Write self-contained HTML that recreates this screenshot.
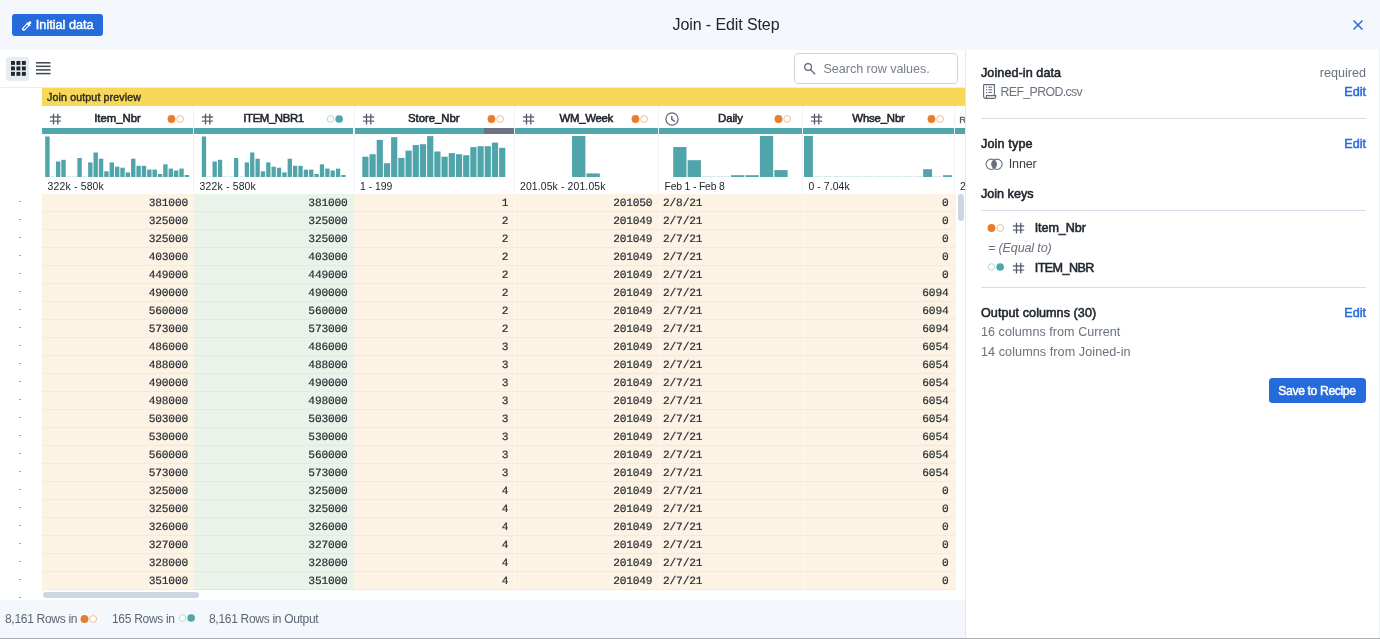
<!DOCTYPE html>
<html><head><meta charset="utf-8"><title>Join - Edit Step</title>
<style>
*{box-sizing:border-box;margin:0;padding:0}
html,body{width:1380px;height:639px;overflow:hidden;background:#fff;font-family:"Liberation Sans",sans-serif;color:#20262e}
.abs{position:absolute}
#hdr{position:absolute;left:0;top:0;width:1380px;height:50px;background:#f4f7fc}
#btn1{position:absolute;left:12px;top:14px;width:91px;height:22px;background:#266bdc;border-radius:3px;color:#fff;-webkit-text-stroke:0.45px;font-size:12.7px;line-height:22px;padding-left:23.8px;letter-spacing:0px}
#title{position:absolute;left:0;top:13px;width:1452px;text-align:center;font-size:16px;line-height:24px;color:#20262e;letter-spacing:-0.1px}
#foot{position:absolute;left:0;top:600px;width:965px;height:38px;background:#f4f7fc;font-size:12px;letter-spacing:-0.3px;color:#5c6672;line-height:38px}
#foot span{position:absolute;top:0;white-space:nowrap}
#botline{position:absolute;left:0;top:638px;width:1380px;height:1px;background:#a9adb3}
#panel{position:absolute;left:965px;top:50px;width:415px;height:588px;background:#fff;border-left:1.5px solid #e4e9f1}
#panel .b{position:absolute;-webkit-text-stroke:0.55px;font-size:12.6px;color:#20262e;white-space:nowrap;line-height:16px}
#panel .g{position:absolute;font-size:12.6px;color:#68717d;white-space:nowrap;line-height:16px}
#panel .e{position:absolute;-webkit-text-stroke:0.5px;font-size:12.6px;color:#266bdc;white-space:nowrap;line-height:16px;right:14px}
#panel .hr{position:absolute;left:15px;width:385px;height:1px;background:#d5dde8}
#save{position:absolute;left:302.5px;top:328px;width:97px;height:25px;background:#266bdc;border-radius:3.5px;letter-spacing:-0.38px;color:#fff;-webkit-text-stroke:0.45px;font-size:12.2px;line-height:26px;text-align:center}
#ybar{position:absolute;left:42px;top:88px;width:923px;height:18px;background:#f7d858;-webkit-text-stroke:0.4px;letter-spacing:0.15px;font-size:10.6px;line-height:18px;padding-left:5px;color:#2a2a22}
.ch{position:absolute;top:106px;height:22.5px;-webkit-text-stroke:0.55px;font-size:11.4px;line-height:25px;text-align:center;color:#20262e;white-space:nowrap}
.tb{position:absolute;top:128px;height:6px;background:#4fa6ab}
.rg{position:absolute;top:180px;height:13px;font-size:10.4px;line-height:13px;color:#20262e;white-space:nowrap;letter-spacing:0.2px}
.ic,.mk{position:absolute}
.col{position:absolute;top:193.5px}
.col span{display:block;transform:rotate(0.03deg)}
.col div{height:18px;border-bottom:1px solid rgba(120,100,60,0.055);font-family:"Liberation Mono",monospace;font-size:11.2px;letter-spacing:-0.17px;-webkit-text-stroke:0.2px;line-height:18.4px;color:#2b3036;white-space:pre}
.o div{background:#fcf3e4}
.g2 div{background:#eaf3ea}
.r div{text-align:right;padding-right:var(--pr)}
.l div{text-align:left;padding-left:4.4px}
.dot{position:absolute;left:19.1px;width:1.6px;height:1.6px;border-radius:1px;background:#8f96a0}
#search{position:absolute;left:794px;top:53px;width:164px;height:31px;border:1px solid #ccd3dc;border-radius:3px;background:#fff;font-size:12.6px;color:#78808b;line-height:30.5px;padding-left:28.5px;letter-spacing:-0.05px;border-radius:4px}
#root{position:absolute;left:0;top:0;width:1380px;height:639px;will-change:transform}
</style></head><body><div id="root">
<div id="hdr">
<div id="btn1">Initial data<svg style="position:absolute;left:9.5px;top:6.75px" width="10" height="10" viewBox="0 0 10 10" fill="none" stroke-linecap="round"><path d="M1.75 7.95L5.9 3.8" stroke="#fff" stroke-width="3.5"/><path d="M2.0 7.7L5.7 4.0" stroke="#266bdc" stroke-width="1.25"/><path d="M4.9 1.8L8.2 5.1" stroke="#fff" stroke-width="1.3" stroke-linecap="butt"/><path d="M6.7 3L8 1.7" stroke="#fff" stroke-width="2.6"/></svg></div>
<div id="title">Join - Edit Step</div>
<svg style="position:absolute;left:1352px;top:19px" width="12" height="12" viewBox="0 0 12 12"><path d="M1.5 1.5L10.5 10.5M10.5 1.5L1.5 10.5" stroke="#266bdc" stroke-width="1.5" fill="none"/></svg>
</div>

<div class="abs" style="left:6px;top:57px;width:23px;height:24px;background:#e7ebf2;border-radius:3px"></div>
<svg class="abs" style="left:10.8px;top:61px" width="15" height="15" viewBox="0 0 15 15" fill="#20262e"><rect x="0" y="0" width="3.9" height="3.9"/><rect x="5.45" y="0" width="3.9" height="3.9"/><rect x="10.9" y="0" width="3.9" height="3.9"/><rect x="0" y="5.45" width="3.9" height="3.9"/><rect x="5.45" y="5.45" width="3.9" height="3.9"/><rect x="10.9" y="5.45" width="3.9" height="3.9"/><rect x="0" y="10.9" width="3.9" height="3.9"/><rect x="5.45" y="10.9" width="3.9" height="3.9"/><rect x="10.9" y="10.9" width="3.9" height="3.9"/></svg>
<svg class="abs" style="left:36px;top:61px" width="15" height="15" viewBox="0 0 15 15" fill="#3d4651"><rect x="0" y="1.05" width="14.5" height="1.5"/><rect x="0" y="4.60" width="14.5" height="1.5"/><rect x="0" y="8.15" width="14.5" height="1.5"/><rect x="0" y="11.85" width="14.5" height="1.5"/></svg>
<div id="search">Search row values.<svg style="position:absolute;left:8px;top:7.5px" width="14" height="14" viewBox="0 0 14 14" fill="none" stroke="#5d6673" stroke-width="1.25"><circle cx="5.1" cy="5" r="3.4"/><path d="M7.7 7.6L12 12.2"/></svg></div>
<div class="abs" style="left:0;top:87px;width:965px;height:1px;background:#eaeef6"></div>
<div id="ybar">Join output preview</div>

<div class="ch" style="left:42px;width:151px"><span style="letter-spacing:-0.02px">Item_Nbr</span></div>
<svg class="ic" style="left:49px;top:112px" width="14" height="14" viewBox="0 0 14 14" fill="none" stroke="#5d6673"><path d="M0.9 5H12.2M0.9 9.1H12.2" stroke-width="1.35" stroke="#687180"/><path d="M4.5 1.7V12.4M8.8 1.7V12.4" stroke-width="1.3" stroke="#535b68"/></svg>
<svg class="mk " style="left:166.5px;top:113.5px" width="18" height="10" viewBox="0 0 18 10"><circle cx="4.5" cy="5" r="3.95" fill="#e67e2e"/><circle cx="13.15" cy="5" r="3.4" fill="#fff" stroke="#f2bc8d" stroke-width="1"/></svg>
<div class="tb" style="left:42px;width:151px"></div>
<div class="rg" style="left:47.5px;letter-spacing:0.2px">322k - 580k</div>
<div class="ch" style="left:194px;width:159px"><span style="letter-spacing:-0.4px">ITEM_NBR1</span></div>
<svg class="ic" style="left:201px;top:112px" width="14" height="14" viewBox="0 0 14 14" fill="none" stroke="#5d6673"><path d="M0.9 5H12.2M0.9 9.1H12.2" stroke-width="1.35" stroke="#687180"/><path d="M4.5 1.7V12.4M8.8 1.7V12.4" stroke-width="1.3" stroke="#535b68"/></svg>
<svg class="mk " style="left:326.25px;top:113.5px" width="18" height="10" viewBox="0 0 18 10"><circle cx="4.5" cy="5" r="3.3" fill="#fff" stroke="#b3d9dc" stroke-width="1"/><circle cx="13.15" cy="5" r="3.8" fill="#4fa6ab"/></svg>
<div class="tb" style="left:194px;width:159px"></div>
<div class="rg" style="left:199.5px;letter-spacing:0.2px">322k - 580k</div>
<div class="abs" style="left:193px;top:106px;width:1px;height:87px;background:#f1f2f4"></div>
<div class="ch" style="left:354.5px;width:158.5px"><span style="letter-spacing:-0.06px">Store_Nbr</span></div>
<svg class="ic" style="left:361.5px;top:112px" width="14" height="14" viewBox="0 0 14 14" fill="none" stroke="#5d6673"><path d="M0.9 5H12.2M0.9 9.1H12.2" stroke-width="1.35" stroke="#687180"/><path d="M4.5 1.7V12.4M8.8 1.7V12.4" stroke-width="1.3" stroke="#535b68"/></svg>
<svg class="mk " style="left:486.5px;top:113.5px" width="18" height="10" viewBox="0 0 18 10"><circle cx="4.5" cy="5" r="3.95" fill="#e67e2e"/><circle cx="13.15" cy="5" r="3.4" fill="#fff" stroke="#f2bc8d" stroke-width="1"/></svg>
<div class="tb" style="left:354.5px;width:158.5px"></div>
<div class="rg" style="left:360.0px;letter-spacing:0.0px">1 - 199</div>
<div class="abs" style="left:353.5px;top:106px;width:1px;height:87px;background:#f1f2f4"></div>
<div class="ch" style="left:514.5px;width:143.5px"><span style="letter-spacing:-0.28px">WM_Week</span></div>
<svg class="ic" style="left:521.5px;top:112px" width="14" height="14" viewBox="0 0 14 14" fill="none" stroke="#5d6673"><path d="M0.9 5H12.2M0.9 9.1H12.2" stroke-width="1.35" stroke="#687180"/><path d="M4.5 1.7V12.4M8.8 1.7V12.4" stroke-width="1.3" stroke="#535b68"/></svg>
<svg class="mk " style="left:630.5px;top:113.5px" width="18" height="10" viewBox="0 0 18 10"><circle cx="4.5" cy="5" r="3.95" fill="#e67e2e"/><circle cx="13.15" cy="5" r="3.4" fill="#fff" stroke="#f2bc8d" stroke-width="1"/></svg>
<div class="tb" style="left:514.5px;width:143.5px"></div>
<div class="rg" style="left:520.0px;letter-spacing:0.14px">201.05k - 201.05k</div>
<div class="abs" style="left:513.5px;top:106px;width:1px;height:87px;background:#f1f2f4"></div>
<div class="ch" style="left:659px;width:143px"><span style="letter-spacing:-0.1px">Daily</span></div>
<svg class="ic" style="left:665px;top:112px" width="14" height="14" viewBox="0 0 14 14" fill="none" stroke="#5d6673" stroke-width="1.2"><circle cx="7" cy="7" r="6.1"/><path d="M6.8 3.9V7.3L9.7 9.3" stroke-width="1.4"/></svg>
<svg class="mk " style="left:774.4px;top:113.5px" width="18" height="10" viewBox="0 0 18 10"><circle cx="4.5" cy="5" r="3.95" fill="#e67e2e"/><circle cx="13.15" cy="5" r="3.4" fill="#fff" stroke="#f2bc8d" stroke-width="1"/></svg>
<div class="tb" style="left:659px;width:143px"></div>
<div class="rg" style="left:664.5px;letter-spacing:-0.17px">Feb 1 - Feb 8</div>
<div class="abs" style="left:658px;top:106px;width:1px;height:87px;background:#f1f2f4"></div>
<div class="ch" style="left:803px;width:151px"><span style="letter-spacing:-0.19px">Whse_Nbr</span></div>
<svg class="ic" style="left:810px;top:112px" width="14" height="14" viewBox="0 0 14 14" fill="none" stroke="#5d6673"><path d="M0.9 5H12.2M0.9 9.1H12.2" stroke-width="1.35" stroke="#687180"/><path d="M4.5 1.7V12.4M8.8 1.7V12.4" stroke-width="1.3" stroke="#535b68"/></svg>
<svg class="mk " style="left:926.9px;top:113.5px" width="18" height="10" viewBox="0 0 18 10"><circle cx="4.5" cy="5" r="3.95" fill="#e67e2e"/><circle cx="13.15" cy="5" r="3.4" fill="#fff" stroke="#f2bc8d" stroke-width="1"/></svg>
<div class="tb" style="left:803px;width:151px"></div>
<div class="rg" style="left:808.5px;letter-spacing:0.08px">0 - 7.04k</div>
<div class="abs" style="left:802px;top:106px;width:1px;height:87px;background:#f1f2f4"></div>
<div class="abs" style="left:484px;top:128px;width:29.5px;height:6px;background:#6b7480"></div>
<div class="abs" style="left:955px;top:128px;width:10px;height:6px;background:#4fa6ab"></div>
<div class="abs" style="left:954px;top:106px;width:1px;height:87px;background:#f1f2f4"></div>
<div class="abs" style="left:959.3px;top:114.2px;-webkit-text-stroke:0.3px;font-size:9.8px;color:#4f5864;line-height:12px;width:5.7px;overflow:hidden">R</div>
<div class="abs" style="left:960px;top:180px;font-size:10.4px;line-height:13px;color:#20262e">2</div>
<svg class="hist" width="965" height="60" viewBox="0 130 965 60" style="position:absolute;left:0;top:130px"><rect x="45.20" y="136.50" width="4.4" height="40.50" fill="#4fa5aa"/><rect x="50.57" y="176.40" width="4.4" height="0.6" fill="#b9dcde"/><rect x="55.93" y="161.50" width="4.4" height="15.50" fill="#4fa5aa"/><rect x="61.30" y="159.80" width="4.4" height="17.20" fill="#4fa5aa"/><rect x="66.66" y="176.40" width="4.4" height="0.6" fill="#b9dcde"/><rect x="72.03" y="176.40" width="4.4" height="0.6" fill="#b9dcde"/><rect x="77.39" y="158.00" width="4.4" height="19.00" fill="#4fa5aa"/><rect x="82.75" y="176.40" width="4.4" height="0.6" fill="#b9dcde"/><rect x="88.12" y="162.40" width="4.4" height="14.60" fill="#4fa5aa"/><rect x="93.49" y="152.50" width="4.4" height="24.50" fill="#4fa5aa"/><rect x="98.85" y="158.70" width="4.4" height="18.30" fill="#4fa5aa"/><rect x="104.22" y="171.30" width="4.4" height="5.70" fill="#4fa5aa"/><rect x="109.58" y="162.40" width="4.4" height="14.60" fill="#4fa5aa"/><rect x="114.95" y="166.70" width="4.4" height="10.30" fill="#4fa5aa"/><rect x="120.31" y="167.70" width="4.4" height="9.30" fill="#4fa5aa"/><rect x="125.68" y="172.40" width="4.4" height="4.60" fill="#4fa5aa"/><rect x="131.04" y="158.70" width="4.4" height="18.30" fill="#4fa5aa"/><rect x="136.41" y="165.80" width="4.4" height="11.20" fill="#4fa5aa"/><rect x="141.77" y="165.80" width="4.4" height="11.20" fill="#4fa5aa"/><rect x="147.13" y="169.60" width="4.4" height="7.40" fill="#4fa5aa"/><rect x="152.50" y="169.60" width="4.4" height="7.40" fill="#4fa5aa"/><rect x="157.87" y="174.00" width="4.4" height="3.00" fill="#4fa5aa"/><rect x="163.23" y="164.30" width="4.4" height="12.70" fill="#4fa5aa"/><rect x="168.60" y="168.60" width="4.4" height="8.40" fill="#4fa5aa"/><rect x="173.96" y="170.50" width="4.4" height="6.50" fill="#4fa5aa"/><rect x="179.32" y="168.60" width="4.4" height="8.40" fill="#4fa5aa"/><rect x="184.69" y="175.00" width="4.4" height="2.00" fill="#4fa5aa"/><rect x="201.80" y="136.50" width="4.3" height="40.50" fill="#4fa5aa"/><rect x="207.17" y="176.40" width="4.3" height="0.6" fill="#b9dcde"/><rect x="212.53" y="161.50" width="4.3" height="15.50" fill="#4fa5aa"/><rect x="217.90" y="159.80" width="4.3" height="17.20" fill="#4fa5aa"/><rect x="223.26" y="176.40" width="4.3" height="0.6" fill="#b9dcde"/><rect x="228.62" y="176.40" width="4.3" height="0.6" fill="#b9dcde"/><rect x="233.99" y="158.00" width="4.3" height="19.00" fill="#4fa5aa"/><rect x="239.36" y="176.40" width="4.3" height="0.6" fill="#b9dcde"/><rect x="244.72" y="162.40" width="4.3" height="14.60" fill="#4fa5aa"/><rect x="250.09" y="152.50" width="4.3" height="24.50" fill="#4fa5aa"/><rect x="255.45" y="158.70" width="4.3" height="18.30" fill="#4fa5aa"/><rect x="260.81" y="171.30" width="4.3" height="5.70" fill="#4fa5aa"/><rect x="266.18" y="162.40" width="4.3" height="14.60" fill="#4fa5aa"/><rect x="271.55" y="166.70" width="4.3" height="10.30" fill="#4fa5aa"/><rect x="276.91" y="167.70" width="4.3" height="9.30" fill="#4fa5aa"/><rect x="282.28" y="172.40" width="4.3" height="4.60" fill="#4fa5aa"/><rect x="287.64" y="158.70" width="4.3" height="18.30" fill="#4fa5aa"/><rect x="293.00" y="165.80" width="4.3" height="11.20" fill="#4fa5aa"/><rect x="298.37" y="165.80" width="4.3" height="11.20" fill="#4fa5aa"/><rect x="303.74" y="169.60" width="4.3" height="7.40" fill="#4fa5aa"/><rect x="309.10" y="169.60" width="4.3" height="7.40" fill="#4fa5aa"/><rect x="314.47" y="174.00" width="4.3" height="3.00" fill="#4fa5aa"/><rect x="319.83" y="164.30" width="4.3" height="12.70" fill="#4fa5aa"/><rect x="325.20" y="168.60" width="4.3" height="8.40" fill="#4fa5aa"/><rect x="330.56" y="170.50" width="4.3" height="6.50" fill="#4fa5aa"/><rect x="335.93" y="168.60" width="4.3" height="8.40" fill="#4fa5aa"/><rect x="341.29" y="175.00" width="4.3" height="2.00" fill="#4fa5aa"/><rect x="362.30" y="156.70" width="6.2" height="20.30" fill="#4fa5aa"/><rect x="369.50" y="154.20" width="6.2" height="22.80" fill="#4fa5aa"/><rect x="376.70" y="139.90" width="6.2" height="37.10" fill="#4fa5aa"/><rect x="383.90" y="163.20" width="6.2" height="13.80" fill="#4fa5aa"/><rect x="391.10" y="137.20" width="6.2" height="39.80" fill="#4fa5aa"/><rect x="398.30" y="157.90" width="6.2" height="19.10" fill="#4fa5aa"/><rect x="405.50" y="150.60" width="6.2" height="26.40" fill="#4fa5aa"/><rect x="412.70" y="145.10" width="6.2" height="31.90" fill="#4fa5aa"/><rect x="419.90" y="144.20" width="6.2" height="32.80" fill="#4fa5aa"/><rect x="427.10" y="136.10" width="6.2" height="40.90" fill="#4fa5aa"/><rect x="434.30" y="151.50" width="6.2" height="25.50" fill="#4fa5aa"/><rect x="441.50" y="156.70" width="6.2" height="20.30" fill="#4fa5aa"/><rect x="448.70" y="153.10" width="6.2" height="23.90" fill="#4fa5aa"/><rect x="455.90" y="154.20" width="6.2" height="22.80" fill="#4fa5aa"/><rect x="463.10" y="155.20" width="6.2" height="21.80" fill="#4fa5aa"/><rect x="470.30" y="147.10" width="6.2" height="29.90" fill="#4fa5aa"/><rect x="477.50" y="146.20" width="6.2" height="30.80" fill="#4fa5aa"/><rect x="484.70" y="146.20" width="6.2" height="30.80" fill="#4fa5aa"/><rect x="491.90" y="142.60" width="6.2" height="34.40" fill="#4fa5aa"/><rect x="499.10" y="147.80" width="6.2" height="29.20" fill="#4fa5aa"/><rect x="572.00" y="136.00" width="13.4" height="41.00" fill="#4fa5aa"/><rect x="586.45" y="173.40" width="13.4" height="3.60" fill="#4fa5aa"/><rect x="673.20" y="147.00" width="13.3" height="30.00" fill="#4fa5aa"/><rect x="687.65" y="160.20" width="13.3" height="16.80" fill="#4fa5aa"/><rect x="702.10" y="176.40" width="13.3" height="0.6" fill="#b9dcde"/><rect x="716.55" y="176.40" width="13.3" height="0.6" fill="#b9dcde"/><rect x="731.00" y="175.20" width="13.3" height="1.80" fill="#4fa5aa"/><rect x="745.45" y="175.20" width="13.3" height="1.80" fill="#4fa5aa"/><rect x="759.90" y="136.00" width="13.3" height="41.00" fill="#4fa5aa"/><rect x="774.35" y="170.10" width="13.3" height="6.90" fill="#4fa5aa"/><rect x="804.00" y="136.00" width="8.9" height="41.00" fill="#4fa5aa"/><rect x="813.93" y="176.40" width="8.9" height="0.6" fill="#b9dcde"/><rect x="823.86" y="176.40" width="8.9" height="0.6" fill="#b9dcde"/><rect x="833.79" y="176.40" width="8.9" height="0.6" fill="#b9dcde"/><rect x="843.72" y="176.40" width="8.9" height="0.6" fill="#b9dcde"/><rect x="853.65" y="176.40" width="8.9" height="0.6" fill="#b9dcde"/><rect x="863.58" y="176.40" width="8.9" height="0.6" fill="#b9dcde"/><rect x="873.51" y="176.40" width="8.9" height="0.6" fill="#b9dcde"/><rect x="883.44" y="176.40" width="8.9" height="0.6" fill="#b9dcde"/><rect x="893.37" y="176.40" width="8.9" height="0.6" fill="#b9dcde"/><rect x="903.30" y="176.40" width="8.9" height="0.6" fill="#b9dcde"/><rect x="913.23" y="176.40" width="8.9" height="0.6" fill="#b9dcde"/><rect x="923.16" y="169.20" width="8.9" height="7.80" fill="#4fa5aa"/><rect x="933.09" y="176.40" width="8.9" height="0.6" fill="#b9dcde"/><rect x="943.02" y="175.20" width="8.9" height="1.80" fill="#4fa5aa"/></svg>
<div class="col o r" style="left:42px;width:152px;--pr:6px"><div><span>381000</span></div><div><span>325000</span></div><div><span>325000</span></div><div><span>403000</span></div><div><span>449000</span></div><div><span>490000</span></div><div><span>560000</span></div><div><span>573000</span></div><div><span>486000</span></div><div><span>488000</span></div><div><span>490000</span></div><div><span>498000</span></div><div><span>503000</span></div><div><span>530000</span></div><div><span>560000</span></div><div><span>573000</span></div><div><span>325000</span></div><div><span>325000</span></div><div><span>326000</span></div><div><span>327000</span></div><div><span>328000</span></div><div><span>351000</span></div></div>
<div class="col g2 r" style="left:194px;width:160px;--pr:6.4px"><div><span>381000</span></div><div><span>325000</span></div><div><span>325000</span></div><div><span>403000</span></div><div><span>449000</span></div><div><span>490000</span></div><div><span>560000</span></div><div><span>573000</span></div><div><span>486000</span></div><div><span>488000</span></div><div><span>490000</span></div><div><span>498000</span></div><div><span>503000</span></div><div><span>530000</span></div><div><span>560000</span></div><div><span>573000</span></div><div><span>325000</span></div><div><span>325000</span></div><div><span>326000</span></div><div><span>327000</span></div><div><span>328000</span></div><div><span>351000</span></div></div>
<div class="col o r" style="left:354px;width:160.5px;--pr:6.2px"><div><span>1</span></div><div><span>2</span></div><div><span>2</span></div><div><span>2</span></div><div><span>2</span></div><div><span>2</span></div><div><span>2</span></div><div><span>2</span></div><div><span>3</span></div><div><span>3</span></div><div><span>3</span></div><div><span>3</span></div><div><span>3</span></div><div><span>3</span></div><div><span>3</span></div><div><span>3</span></div><div><span>4</span></div><div><span>4</span></div><div><span>4</span></div><div><span>4</span></div><div><span>4</span></div><div><span>4</span></div></div>
<div class="col o r" style="left:514.5px;width:144.5px;--pr:7.1px"><div><span>201050</span></div><div><span>201049</span></div><div><span>201049</span></div><div><span>201049</span></div><div><span>201049</span></div><div><span>201049</span></div><div><span>201049</span></div><div><span>201049</span></div><div><span>201049</span></div><div><span>201049</span></div><div><span>201049</span></div><div><span>201049</span></div><div><span>201049</span></div><div><span>201049</span></div><div><span>201049</span></div><div><span>201049</span></div><div><span>201049</span></div><div><span>201049</span></div><div><span>201049</span></div><div><span>201049</span></div><div><span>201049</span></div><div><span>201049</span></div></div>
<div class="col o l" style="left:659px;width:144px"><div><span>2/8/21</span></div><div><span>2/7/21</span></div><div><span>2/7/21</span></div><div><span>2/7/21</span></div><div><span>2/7/21</span></div><div><span>2/7/21</span></div><div><span>2/7/21</span></div><div><span>2/7/21</span></div><div><span>2/7/21</span></div><div><span>2/7/21</span></div><div><span>2/7/21</span></div><div><span>2/7/21</span></div><div><span>2/7/21</span></div><div><span>2/7/21</span></div><div><span>2/7/21</span></div><div><span>2/7/21</span></div><div><span>2/7/21</span></div><div><span>2/7/21</span></div><div><span>2/7/21</span></div><div><span>2/7/21</span></div><div><span>2/7/21</span></div><div><span>2/7/21</span></div></div>
<div class="col o r" style="left:803px;width:152.5px;--pr:7px"><div><span>0</span></div><div><span>0</span></div><div><span>0</span></div><div><span>0</span></div><div><span>0</span></div><div><span>6094</span></div><div><span>6094</span></div><div><span>6094</span></div><div><span>6054</span></div><div><span>6054</span></div><div><span>6054</span></div><div><span>6054</span></div><div><span>6054</span></div><div><span>6054</span></div><div><span>6054</span></div><div><span>6054</span></div><div><span>0</span></div><div><span>0</span></div><div><span>0</span></div><div><span>0</span></div><div><span>0</span></div><div><span>0</span></div></div>
<div class="abs" style="left:514px;top:193.5px;width:1px;height:396px;background:rgba(255,255,255,0.45)"></div>
<div class="abs" style="left:658.5px;top:193.5px;width:1px;height:396px;background:rgba(255,255,255,0.45)"></div>
<div class="abs" style="left:802.5px;top:193.5px;width:1px;height:396px;background:rgba(255,255,255,0.45)"></div>
<div class="dot" style="top:200.7px"></div>
<div class="dot" style="top:218.7px"></div>
<div class="dot" style="top:236.7px"></div>
<div class="dot" style="top:254.7px"></div>
<div class="dot" style="top:272.7px"></div>
<div class="dot" style="top:290.7px"></div>
<div class="dot" style="top:308.7px"></div>
<div class="dot" style="top:326.7px"></div>
<div class="dot" style="top:344.7px"></div>
<div class="dot" style="top:362.7px"></div>
<div class="dot" style="top:380.7px"></div>
<div class="dot" style="top:398.7px"></div>
<div class="dot" style="top:416.7px"></div>
<div class="dot" style="top:434.7px"></div>
<div class="dot" style="top:452.7px"></div>
<div class="dot" style="top:470.7px"></div>
<div class="dot" style="top:488.7px"></div>
<div class="dot" style="top:506.7px"></div>
<div class="dot" style="top:524.7px"></div>
<div class="dot" style="top:542.7px"></div>
<div class="dot" style="top:560.7px"></div>
<div class="dot" style="top:578.7px"></div>
<div class="dot" style="top:596.7px"></div>
<div class="abs" style="left:958px;top:194px;width:6px;height:27px;border-radius:3px;background:#cdd6e2"></div>
<div class="abs" style="left:42.5px;top:592px;width:156.5px;height:5.7px;border-radius:3px;background:#cdd6e2"></div>
<div id="foot"><span style="left:5px">8,161 Rows in</span><span style="left:112px">165 Rows in</span><span style="left:209px">8,161 Rows in Output</span><svg class="mk " style="left:80.1px;top:13.5px" width="18" height="10" viewBox="0 0 18 10"><circle cx="4.5" cy="5" r="3.95" fill="#e67e2e"/><circle cx="13.15" cy="5" r="3.4" fill="#fff" stroke="#f2bc8d" stroke-width="1"/></svg><svg class="mk " style="left:178.3px;top:13.4px" width="18" height="10" viewBox="0 0 18 10"><circle cx="4.5" cy="5" r="3.3" fill="#fff" stroke="#b3d9dc" stroke-width="1"/><circle cx="13.15" cy="5" r="3.8" fill="#4fa6ab"/></svg></div>
<div id="panel">
<div class="b" style="left:15px;top:15px;letter-spacing:0.07px;">Joined-in data</div><div class="g" style="right:14px;top:15px;letter-spacing:0px;">required</div>
<svg class="abs" style="left:17.4px;top:34.4px" width="14" height="15.5" viewBox="0 0 14 15.5" fill="none" stroke="#5f6875" stroke-width="1.1"><path d="M0.6 0.6H11.4V11.6"/><path d="M0.6 0.6V12.6Q0.6 14.4 2.4 14.4H11Q12.8 14.4 12.8 12.6V11.6H3.4V12.8Q3.4 14.4 2 14.4"/><path d="M3 3.2H4.2M5.4 3.2H9.2M3 5.8H4.2M5.4 5.8H9.2M3 8.4H4.2M5.4 8.4H9.2" stroke-width="1"/></svg>
<div class="g" style="left:34.5px;top:34px;letter-spacing:-0.6px;font-size:12.3px">REF_PROD.csv</div><div class="e" style="right:14px;top:34px;letter-spacing:0px;">Edit</div>
<div class="hr" style="top:68px"></div>
<div class="b" style="left:15px;top:86px;letter-spacing:0.15px;">Join type</div><div class="e" style="right:14px;top:86px;letter-spacing:0px;">Edit</div>
<svg class="abs" style="left:18.7px;top:107.6px" width="19" height="13" viewBox="0 0 19 13" fill="none" stroke="#68717d" stroke-width="1.1"><path d="M9.1 1.9A5.2 5.2 0 0 1 9.1 10.7A5.2 5.2 0 0 1 9.1 1.9Z" fill="#68717d" stroke="none"/><circle cx="6.25" cy="6.3" r="5.2"/><circle cx="11.95" cy="6.3" r="5.2"/></svg>
<div class="abs" style="left:42.8px;top:106px;letter-spacing:-0.2px;font-size:12.6px;line-height:16px;color:#3a424c">Inner</div>
<div class="b" style="left:15px;top:136px;letter-spacing:0px;">Join keys</div>
<div class="hr" style="top:160px"></div>
<svg class="mk " style="left:21.2px;top:173.2px" width="18" height="10" viewBox="0 0 18 10"><circle cx="4.5" cy="5" r="3.95" fill="#e67e2e"/><circle cx="13.15" cy="5" r="3.4" fill="#fff" stroke="#f2bc8d" stroke-width="1"/></svg><svg class="ic" style="left:46.1px;top:171.3px" width="14" height="14" viewBox="0 0 14 14" fill="none" stroke="#5d6673"><path d="M0.9 5H12.2M0.9 9.1H12.2" stroke-width="1.35" stroke="#687180"/><path d="M4.5 1.7V12.4M8.8 1.7V12.4" stroke-width="1.3" stroke="#535b68"/></svg><div class="b" style="left:68.7px;top:170px;letter-spacing:-0.09px;">Item_Nbr</div>
<div class="g" style="left:22px;top:190px;letter-spacing:-0.16px;font-style:italic">= (Equal to)</div>
<svg class="mk " style="left:21.2px;top:212.4px" width="18" height="10" viewBox="0 0 18 10"><circle cx="4.5" cy="5" r="3.3" fill="#fff" stroke="#b3d9dc" stroke-width="1"/><circle cx="13.15" cy="5" r="3.8" fill="#4fa6ab"/></svg><svg class="ic" style="left:46.1px;top:210.8px" width="14" height="14" viewBox="0 0 14 14" fill="none" stroke="#5d6673"><path d="M0.9 5H12.2M0.9 9.1H12.2" stroke-width="1.35" stroke="#687180"/><path d="M4.5 1.7V12.4M8.8 1.7V12.4" stroke-width="1.3" stroke="#535b68"/></svg><div class="b" style="left:68.7px;top:210px;letter-spacing:-0.56px;">ITEM_NBR</div>
<div class="hr" style="top:237px"></div>
<div class="b" style="left:15px;top:255px;letter-spacing:0.06px;">Output columns (30)</div><div class="e" style="right:14px;top:255px;letter-spacing:0px;">Edit</div>
<div class="g" style="left:15px;top:274px;letter-spacing:0.035px;">16 columns from Current</div>
<div class="g" style="left:15px;top:294px;letter-spacing:0.076px;">14 columns from Joined-in</div>
<div id="save">Save to Recipe</div>
</div>
<div class="abs" style="left:1379px;top:50px;width:1px;height:588px;background:#eef1f7"></div>
<div id="botline"></div>
</div></body></html>
